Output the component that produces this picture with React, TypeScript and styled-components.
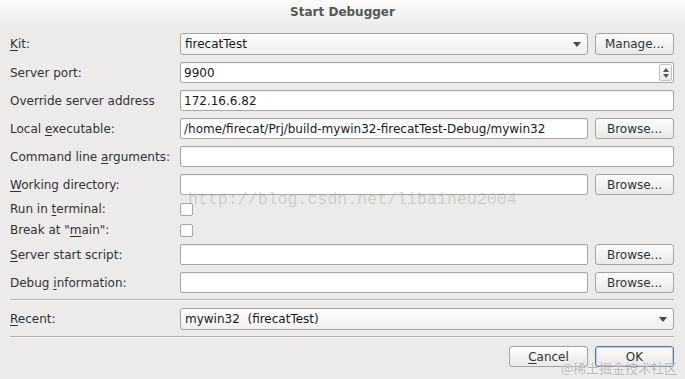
import styled, { createGlobalStyle } from "styled-components";

const GlobalStyle = createGlobalStyle`
  html, body {
    margin: 0;
    padding: 0;
    background: #edebe9;
  }
  body {
    font-family: "DejaVu Sans", "Noto Sans", sans-serif;
    font-size: 12px;
    color: #2e3436;
  }
`;

const Window = styled.div`
  position: relative;
  width: 685px;
  height: 379px;
  overflow: hidden;
  background: #edebe9;
`;

const TitleBar = styled.div`
  height: 23px;
  display: flex;
  align-items: center;
  justify-content: center;
  background: linear-gradient(180deg, #fbfbfa 0%, #f1efed 100%);
  font-weight: bold;
  font-size: 12px;
  color: #555753;
`;

const Form = styled.div`
  display: flex;
  flex-direction: column;
  padding: 10px 11px 0 10px;
`;

const Row = styled.div<{ $gap?: number; $h?: number }>`
  display: grid;
  grid-template-columns: 163px 1fr 79px;
  column-gap: 7px;
  align-items: center;
  height: ${(p) => p.$h ?? 21}px;
  margin-top: ${(p) => p.$gap ?? 7}px;
`;

const Label = styled.div`
  font-size: 12px;
  white-space: nowrap;
  color: #2e3436;
`;

const Key = styled.span`
  text-decoration: underline;
  text-underline-offset: 2px;
`;

const Field = styled.div<{ $span?: boolean }>`
  grid-column: ${(p) => (p.$span ? "2 / 4" : "2 / 3")};
  height: 100%;
  box-sizing: border-box;
  border: 1px solid #a7a6a4;
  border-radius: 2px;
  background: #ffffff;
  box-shadow: inset 0 1px 1px rgba(0, 0, 0, 0.06);
  display: flex;
  align-items: center;
  padding-left: 3px;
  font-size: 12px;
  color: #1a1a1a;
  white-space: nowrap;
  overflow: hidden;
  position: relative;
`;

const Combo = styled.div<{ $span?: boolean }>`
  grid-column: ${(p) => (p.$span ? "2 / 4" : "2 / 3")};
  height: 100%;
  box-sizing: border-box;
  border: 1px solid #a5a4a2;
  border-radius: 3px;
  background: linear-gradient(180deg, #fdfdfd 0%, #f1f0ef 100%);
  display: flex;
  align-items: center;
  justify-content: space-between;
  padding: 0 6px 0 4px;
  font-size: 12px;
  color: #1a1a1a;
`;

const Arrow = styled.span`
  width: 0;
  height: 0;
  border-left: 4px solid transparent;
  border-right: 4px solid transparent;
  border-top: 5px solid #4a4a4a;
`;

const SpinArrows = styled.div`
  position: absolute;
  right: 1px;
  top: 1px;
  bottom: 1px;
  width: 11px;
  border: 1px solid #c4c3c1;
  border-radius: 2px;
  background: linear-gradient(180deg, #fbfbfb, #eceae8);
  display: flex;
  flex-direction: column;
  align-items: center;
  justify-content: center;
  gap: 2px;
`;

const Tri = styled.span<{ $up?: boolean }>`
  width: 0;
  height: 0;
  border-left: 3px solid transparent;
  border-right: 3px solid transparent;
  ${(p) =>
    p.$up
      ? "border-bottom: 4px solid #555;"
      : "border-top: 4px solid #555;"}
`;

const Button = styled.div<{ $default?: boolean }>`
  height: 100%;
  box-sizing: border-box;
  border: 1px solid ${(p) => (p.$default ? "#4f7aa3" : "#a5a4a2")};
  border-radius: 3px;
  background: linear-gradient(180deg, #fcfcfc 0%, #ebe9e7 100%);
  box-shadow: ${(p) => (p.$default ? "inset 0 0 0 1px #b9d2ea" : "none")};
  display: flex;
  align-items: center;
  justify-content: center;
  font-size: 12px;
  color: #2e3436;
`;

const Check = styled.div`
  width: 13px;
  height: 13px;
  box-sizing: border-box;
  border: 1px solid #a9a8a6;
  border-radius: 2px;
  background: #fbfbfb;
`;

const Separator = styled.div<{ $gap: number }>`
  height: 1px;
  background: #b3b1ae;
  margin-top: ${(p) => p.$gap}px;
  box-shadow: 0 1px 0 #fafafa;
`;

const ButtonRow = styled.div`
  display: flex;
  justify-content: flex-end;
  gap: 7px;
  margin-top: 9px;
  height: 21px;
`;

const DialogButton = styled(Button)`
  width: 79px;
`;

const Watermark = styled.div`
  position: absolute;
  left: 188px;
  top: 190px;
  font-family: "Liberation Mono", "DejaVu Sans Mono", monospace;
  font-size: 16.6px;
  color: rgba(160, 156, 150, 0.38);
  pointer-events: none;
`;

const Badge = styled.div`
  position: absolute;
  right: 8px;
  bottom: 2px;
  font-family: "Noto Sans CJK SC", "DejaVu Sans", sans-serif;
  font-size: 13px;
  color: rgba(140, 140, 140, 0.6);
  text-shadow: 0 0 2px #fff;
  pointer-events: none;
`;

export default function App() {
  return (
    <Window>
      <GlobalStyle />
      <TitleBar>Start Debugger</TitleBar>
      <Form>
        <Row $gap={0} $h={22}>
          <Label>
            <Key>K</Key>it:
          </Label>
          <Combo>
            firecatTest
            <Arrow />
          </Combo>
          <Button>Manage...</Button>
        </Row>
        <Row>
          <Label>Server port:</Label>
          <Field $span>
            9900
            <SpinArrows>
              <Tri $up />
              <Tri />
            </SpinArrows>
          </Field>
        </Row>
        <Row>
          <Label>Override server address</Label>
          <Field $span>172.16.6.82</Field>
        </Row>
        <Row>
          <Label>
            Local <Key>e</Key>xecutable:
          </Label>
          <Field>/home/firecat/Prj/build-mywin32-firecatTest-Debug/mywin32</Field>
          <Button>Browse...</Button>
        </Row>
        <Row>
          <Label>
            Command line <Key>a</Key>rguments:
          </Label>
          <Field $span />
        </Row>
        <Row>
          <Label>
            <Key>W</Key>orking directory:
          </Label>
          <Field />
          <Button>Browse...</Button>
        </Row>
        <Row $h={14}>
          <Label>
            Run in <Key>t</Key>erminal:
          </Label>
          <Check />
        </Row>
        <Row $h={14}>
          <Label>
            Break at "<Key>m</Key>ain":
          </Label>
          <Check />
        </Row>
        <Row>
          <Label>
            <Key>S</Key>erver start script:
          </Label>
          <Field />
          <Button>Browse...</Button>
        </Row>
        <Row>
          <Label>
            Debug <Key>i</Key>nformation:
          </Label>
          <Field />
          <Button>Browse...</Button>
        </Row>
        <Separator $gap={6} />
        <Row $gap={8} $h={22}>
          <Label>
            <Key>R</Key>ecent:
          </Label>
          <Combo $span>
            mywin32&nbsp; (firecatTest)
            <Arrow />
          </Combo>
        </Row>
        <Separator $gap={6} />
        <ButtonRow>
          <DialogButton>
            <span>
              <Key>C</Key>ancel
            </span>
          </DialogButton>
          <DialogButton $default>OK</DialogButton>
        </ButtonRow>
      </Form>
      <Watermark>http://blog.csdn.net/libaineu2004</Watermark>
      <Badge>@稀土掘金技术社区</Badge>
    </Window>
  );
}
